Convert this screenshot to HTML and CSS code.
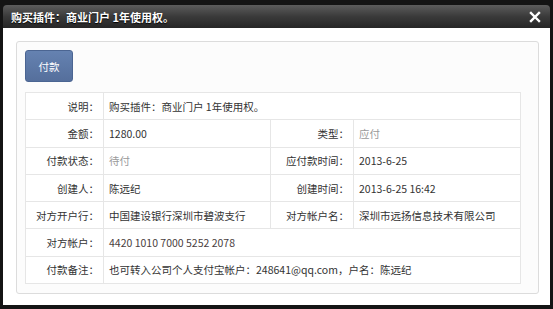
FILE: index.html
```html
<!DOCTYPE html>
<html lang="zh-CN">
<head>
    <meta charset="UTF-8">
    <title>购买插件</title>
    <link rel="stylesheet" href="styles.css">
</head>
<body>
    <div class="dialog">
        <div class="dialog_title">
            <span>购买插件：商业门户 1年使用权。</span>
            <svg class="close" width="12" height="12" viewBox="0 0 12 12">
                <path d="M2 2 L10 10 M10 2 L2 10" stroke="#fff" stroke-width="2.4" stroke-linecap="square"/>
            </svg>
        </div>
        <div class="dialog_body">
            <div class="panel">
                <button class="pay_btn">付款</button>
                <table class="info">
                    <colgroup>
                        <col class="col_label">
                        <col class="col_value">
                        <col class="col_label2">
                        <col class="col_value">
                    </colgroup>
                    <tr>
                        <td class="label">说明：</td>
                        <td colspan="3">购买插件：商业门户 1年使用权。</td>
                    </tr>
                    <tr>
                        <td class="label">金额：</td>
                        <td>1280.00</td>
                        <td class="label">类型：</td>
                        <td class="muted">应付</td>
                    </tr>
                    <tr>
                        <td class="label">付款状态：</td>
                        <td class="muted">待付</td>
                        <td class="label">应付款时间：</td>
                        <td>2013-6-25</td>
                    </tr>
                    <tr>
                        <td class="label">创建人：</td>
                        <td>陈远纪</td>
                        <td class="label">创建时间：</td>
                        <td>2013-6-25 16:42</td>
                    </tr>
                    <tr>
                        <td class="label">对方开户行：</td>
                        <td>中国建设银行深圳市碧波支行</td>
                        <td class="label">对方帐户名：</td>
                        <td>深圳市远扬信息技术有限公司</td>
                    </tr>
                    <tr>
                        <td class="label">对方帐户：</td>
                        <td colspan="3" class="account">4420 1010 7000 5252 2078</td>
                    </tr>
                    <tr>
                        <td class="label">付款备注：</td>
                        <td colspan="3">也可转入公司个人支付宝帐户：248641@qq.com，户名：陈远纪</td>
                    </tr>
                </table>
            </div>
        </div>
    </div>
</body>
</html>
```

FILE: styles.css
```css
body{
    margin: 0;
    background-color: #141414;
    font-family: "Noto Sans CJK SC", "Noto Sans", sans-serif;
    font-size: 10.5px;
    color: #333;
}
.dialog{
    width: 547px;
    margin: 5px 0 0 3px;
}
.dialog_title{
    height: 23px;
    display: flex;
    align-items: center;
    justify-content: space-between;
    padding: 0 9px 0 8px;
    background: linear-gradient(#5c5c5c, #3a3a3a 50%, #262626);
    border-radius: 4px 4px 0 0;
    color: #fff;
    font-weight: bold;
    font-size: 11px;
    text-shadow: 0 1px 1px #000;
}
.close{
    display: block;
}
.dialog_body{
    background-color: #fff;
    padding: 13px 11px 11px 13px;
}
.panel{
    border: 1px solid #dcdcdc;
    border-radius: 3px;
    background-color: #fcfcfc;
    padding: 8px 18px 9px 8px;
    display: flex;
    flex-direction: column;
    align-items: flex-start;
}
.pay_btn{
    width: 48px;
    height: 32px;
    border: 1px solid #4b6592;
    border-radius: 3px;
    background: linear-gradient(#6582b1, #556f9c);
    color: #fff;
    font-family: inherit;
    font-size: 10.5px;
    padding: 0;
}
.info{
    margin-top: 10px;
    width: 495px;
    border-collapse: collapse;
    background-color: #fff;
    table-layout: fixed;
}
.col_label{
    width: 78px;
}
.col_value{
    width: 167px;
}
.col_label2{
    width: 83px;
}
.info td{
    border: 1px solid #e6e6e6;
    height: 26.3px;
    padding: 0 5px 0 5px;
    white-space: nowrap;
}
.info td.label{
    text-align: right;
    padding-right: 4px;
}
.info td.muted{
    color: #9a9a9a;
}
.info td.account{
    color: #4a4040;
}
```
